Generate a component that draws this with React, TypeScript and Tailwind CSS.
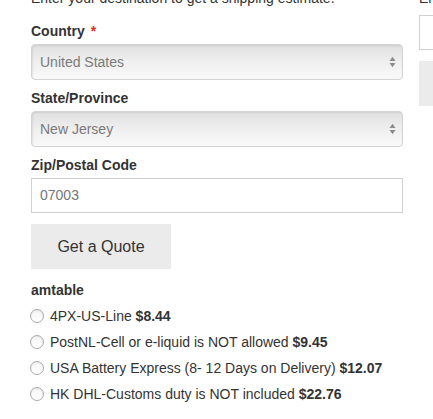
import React from "react";

function SelectBox({ value }: { value: string }) {
  return (
    <div className="h-[36px] rounded-[4px] border border-[#d3d3d3] bg-gradient-to-b from-[#e0e0e0] via-[#efefef] to-[#f9f9f9] shadow-[inset_1px_1px_2px_rgba(0,0,0,0.08)] flex items-center justify-between pl-[8px] pr-[6px]">
      <span className="text-[#7a7a7a]">{value}</span>
      <svg width="7" height="12" viewBox="0 0 7 12">
        <path d="M0.5 5 L3.5 0.8 L6.5 5 Z" fill="#8c8c8c" />
        <path d="M0.5 7 L3.5 11.2 L6.5 7 Z" fill="#8c8c8c" />
      </svg>
    </div>
  );
}

function Field({ label, required, children, className = "" }: { label: string; required?: boolean; children: React.ReactNode; className?: string }) {
  return (
    <div className={className}>
      <div className="h-5 leading-5 font-bold mb-[3px]">
        {label}
        {required && <span className="text-[#e02b27] ml-[6px]">*</span>}
      </div>
      {children}
    </div>
  );
}

const rates = [
  { name: "4PX-US-Line", price: "$8.44" },
  { name: "PostNL-Cell or e-liquid is NOT allowed", price: "$9.45" },
  { name: "USA Battery Express (8- 12 Days on Delivery)", price: "$12.07" },
  { name: "HK DHL-Customs duty is NOT included", price: "$22.76" },
];

export default function App() {
  return (
    <div className="w-[433px] h-[419px] overflow-hidden bg-white text-[14px] text-[#333] font-['Liberation_Sans',Arial,sans-serif]">
      <div className="flex gap-4 pl-[31px] -mt-[12px]">
        <div className="w-[372px] shrink-0">
          <p className="leading-5 whitespace-nowrap">Enter your destination to get a shipping estimate.</p>

          <Field label="Country" required className="mt-[13px]">
            <SelectBox value="United States" />
          </Field>
          <Field label="State/Province" className="mt-[8px]">
            <SelectBox value="New Jersey" />
          </Field>
          <Field label="Zip/Postal Code" className="mt-[8px]">
            <div className="h-[35px] border border-[#d0d0d0] bg-white flex items-center pl-[8px] text-[#767676]">07003</div>
          </Field>

          <button className="mt-[11px] h-[45px] w-[140px] bg-[#ebebeb] text-[16px] text-[#333]">Get a Quote</button>

          <div className="mt-[11px] h-5 leading-5 font-bold">amtable</div>
          <div className="mt-[3px]">
            {rates.map((r) => (
              <label key={r.name} className="h-[26px] flex items-center whitespace-nowrap">
                <span className="w-[14px] h-[14px] rounded-full border border-[#a9a9a9] bg-gradient-to-b from-[#f4f4f4] to-white shadow-[inset_0_1px_1px_rgba(0,0,0,0.06)] -ml-[1px] mr-[6px] shrink-0" />
                <span>
                  {r.name} <b>{r.price}</b>
                </span>
              </label>
            ))}
          </div>
        </div>

        <div className="w-[300px] shrink-0">
          <p className="leading-5 whitespace-nowrap">Enter a discount code</p>
          <div className="mt-[7px] h-[35px] border border-[#d0d0d0] bg-white" />
          <div className="mt-[11px] h-[45px] w-[160px] bg-[#ebebeb]" />
        </div>
      </div>
    </div>
  );
}
